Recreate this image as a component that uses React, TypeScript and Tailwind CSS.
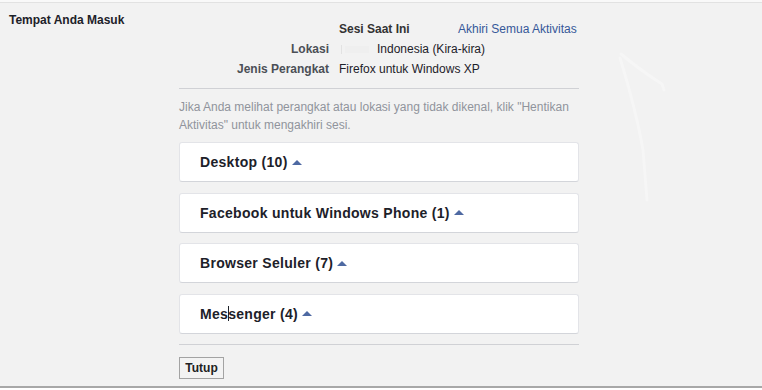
import React from "react";

const Tri = () => (
  <svg width="10" height="5" viewBox="0 0 10 5" className="ml-[4px] inline-block" style={{ verticalAlign: "baseline" }}>
    <polygon points="0,5 5,0 10,5" fill="#4e69a2" />
  </svg>
);

const Card = ({ title }: { title: React.ReactNode }) => (
  <div className="h-[40px] flex items-center rounded-[3px] border border-[#e3e4e8] border-b-[#d3d5da] bg-white pl-[20px]">
    <span className="text-[14px] leading-[18px] font-bold tracking-[0.3px] text-[#1d2129]">{title}</span>
    <Tri />
  </div>
);

export default function App() {
  return (
    <div
      className="relative w-[762px] h-[390px] flex flex-col bg-[#f2f2f2] overflow-hidden"
      style={{ fontFamily: '"Liberation Sans", Arial, sans-serif' }}
    >
      <div className="h-[2px] bg-[#f9f9f9]" />
      <div className="h-px bg-[#e2e2e2]" />
      <div className="flex-1 flex">
        <div className="w-[179px] pl-[9px] pt-[9px]">
          <div className="text-[12px] leading-[16px] font-bold text-[#1d2129]">Tempat Anda Masuk</div>
        </div>
        <div className="w-[400px] pt-[16px] flex flex-col">
          <div className="grid grid-cols-[150px_1fr] gap-x-[10px] text-[12px] leading-[20px]">
            <div />
            <div className="flex">
              <span className="w-[119px] font-bold text-[#333]">Sesi Saat Ini</span>
              <span className="text-[#365899]">Akhiri Semua Aktivitas</span>
            </div>
            <div className="text-right font-bold text-[#4b4f56]">Lokasi</div>
            <div className="flex items-center text-[#1d2129]">
              <span className="inline-block w-[38px] h-[12px] relative">
                <span className="absolute left-[2px] top-[2px] w-px h-[9px] bg-[#e2e2e2]" />
                <span className="absolute left-[6px] top-[3px] w-[24px] h-[7px] bg-[#efefef]" />
              </span>
              <span>Indonesia (Kira-kira)</span>
            </div>
            <div className="text-right font-bold text-[#4b4f56]">Jenis Perangkat</div>
            <div className="text-[#1d2129]">Firefox untuk Windows XP</div>
          </div>
          <div className="mt-[9px] h-px bg-[#d0d1d5]" />
          <div className="mt-[9px] text-[12px] leading-[18px] text-[#90949c]">
            Jika Anda melihat perangkat atau lokasi yang tidak dikenal, klik "Hentikan Aktivitas" untuk mengakhiri sesi.
          </div>
          <div className="mt-[8px] flex flex-col gap-[10.5px]">
            <Card title="Desktop (10)" />
            <Card title="Facebook untuk Windows Phone (1)" />
            <Card title="Browser Seluler (7)" />
            <Card
              title={
                <>
                  Mes
                  <span className="inline-block w-px h-[15px] bg-[#1d2129] align-[-2px] -mx-[0.5px]" />
                  senger (4)
                </>
              }
            />
          </div>
          <div className="mt-[10.5px] h-px bg-[#d0d1d5]" />
          <div className="mt-[10px]">
            <button className="h-[22px] w-[45px] border border-[#a3a3a3] bg-[#f3f3f3] text-[12px] font-bold text-[#222] leading-[20px]">
              Tutup
            </button>
          </div>
        </div>
      </div>
      <div className="h-[2px] bg-[#a8a8a8]" />
      <div className="h-[2px] bg-white" />
      <svg className="absolute left-0 top-0 pointer-events-none" width="762" height="390">
        <path d="M621 54 Q640 70 662 84 L664 90" stroke="#ffffff" strokeOpacity="0.3" strokeWidth="3" fill="none" strokeLinecap="round" />
        <path d="M620 58 Q636 110 643 150 L647 200" stroke="#ffffff" strokeOpacity="0.3" strokeWidth="3" fill="none" strokeLinecap="round" />
      </svg>
    </div>
  );
}
